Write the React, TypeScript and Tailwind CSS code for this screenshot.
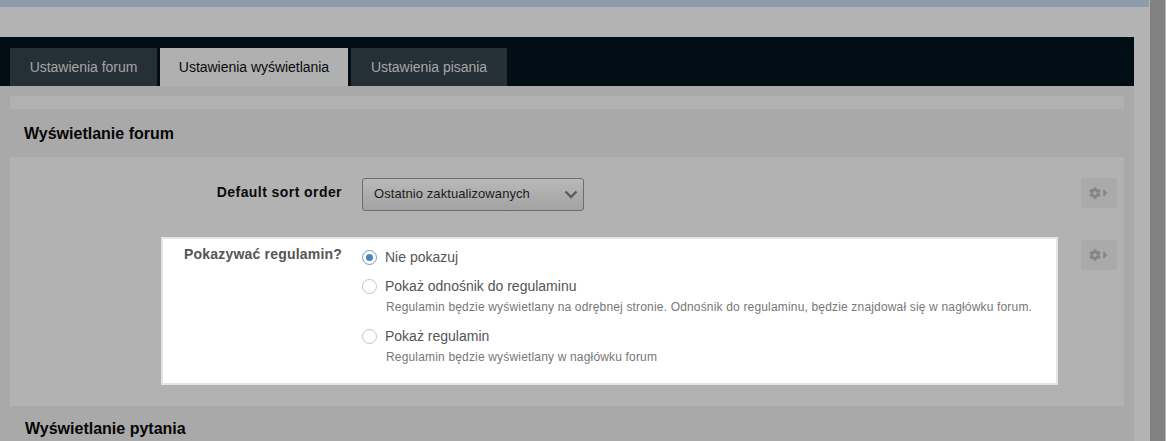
import React from 'react';
import { FaCog, FaCaretRight } from 'react-icons/fa';

const GearButton = ({ className = '' }: { className?: string }) => (
  <div className={`flex h-[30px] w-9 items-center justify-center rounded-[2px] bg-[#aaaaaa] pb-[1px] text-[#858585] ${className}`}>
    <FaCog className="h-3 w-3" />
    <FaCaretRight className="ml-[1px] h-3 w-[7px]" />
  </div>
);

const Radio = ({ checked = false }: { checked?: boolean }) => (
  <span
    className={`flex h-[15px] w-[15px] shrink-0 items-center justify-center rounded-full border bg-white ${
      checked ? 'border-[#6f9cc4]' : 'border-[#c4c4c4]'
    }`}
  >
    {checked && <span className="h-[7px] w-[7px] rounded-full bg-[#4a86bd]" />}
  </span>
);

const App = () => {
  return (
    <div className="flex h-[441px] w-[1166px] overflow-hidden bg-[#b3b3b3] font-['Liberation_Sans',Arial,sans-serif]">
      <div className="w-[1149px] shrink-0">
        {/* top strip */}
        <div className="h-[7px] bg-[#8e9dab]" />

        <div className="mt-[30px] w-[1134px]">
          {/* Tabs */}
          <div className="flex h-[49px] items-end gap-[3px] bg-[#020e15] pl-[10px] text-sm tracking-[-0.03px]">
            <div className="flex h-[38px] w-[147px] items-center justify-center bg-[#242f36] text-[#a6a6a6]">Ustawienia forum</div>
            <div className="flex h-[38px] w-[188px] items-center justify-center bg-[#b0b0b0] text-[#0b0b0b]">Ustawienia wyświetlania</div>
            <div className="flex h-[38px] w-[156px] items-center justify-center bg-[#242f36] text-[#a6a6a6]">Ustawienia pisania</div>
          </div>

          <div className="h-[355px] bg-[#a9a9a9] px-[10px] pt-[10px]">
            <div className="h-[13px] bg-[#b1b1b1]" />
            <h2 className="mt-[16px] pl-[14px] text-base leading-[18px] font-bold text-[#050505]">Wyświetlanie forum</h2>

            {/* Settings panel */}
            <div className="mt-[14px] h-[249px] bg-[#b2b2b2] pl-[151px]">
              <div className="flex pt-[21px]">
                <div className="w-[181px] pt-[6px] text-right text-sm leading-4 font-bold tracking-[0.43px] text-[#0a0a0a]">Default sort order</div>
                <div className="ml-[20px] flex h-[33px] w-[222px] items-center justify-between rounded-[3px] border border-[#6d6d6d] bg-linear-to-b from-[#b9b9b9] to-[#a2a2a2] pr-[5px] pl-[11px] text-sm text-[#1c1c1c]">
                  <span className="text-[13px] tracking-[0.08px]">Ostatnio zaktualizowanych</span>
                  <svg width="14" height="9" viewBox="0 0 14 9" fill="none" stroke="#5c5c5c" strokeWidth="2.4">
                    <path d="M1.5 1.5 7 7l5.5-5.5" />
                  </svg>
                </div>
                <GearButton className="ml-[497px]" />
              </div>

              <div className="mt-[26px] flex">
                {/* highlighted row */}
                <div className="flex h-[148px] w-[897px] border-2 border-[#e4e4e4] bg-white">
                  <div className="w-[179px] pt-[7px] text-right text-sm leading-4 font-bold tracking-[0.2px] text-[#555555]">Pokazywać regulamin?</div>
                  <div className="ml-[20px] pt-[10px] text-[#555555]">
                    <label className="flex h-4 items-center gap-2 text-sm">
                      <Radio checked />
                      <span>Nie pokazuj</span>
                    </label>
                    <label className="mt-[13px] flex h-4 items-center gap-2 text-sm">
                      <Radio />
                      <span>Pokaż odnośnik do regulaminu</span>
                    </label>
                    <p className="mt-[6px] pl-[24px] text-xs leading-[14px] tracking-[0.17px] text-[#777777]">
                      Regulamin będzie wyświetlany na odrębnej stronie. Odnośnik do regulaminu, będzie znajdował się w nagłówku forum.
                    </p>
                    <label className="mt-[14px] flex h-4 items-center gap-2 text-sm">
                      <Radio />
                      <span>Pokaż regulamin</span>
                    </label>
                    <p className="mt-[6px] pl-[24px] text-xs leading-[14px] tracking-[0.17px] text-[#777777]">
                      Regulamin będzie wyświetlany w nagłówku forum
                    </p>
                  </div>
                </div>
                <GearButton className="mt-[3px] ml-[23px]" />
              </div>
            </div>

            <h2 className="mt-[14px] pl-[15px] text-base leading-[18px] font-bold text-[#050505]">Wyświetlanie pytania</h2>
          </div>
        </div>
      </div>

      {/* scrollbar */}
      <div className="ml-[1px] h-full w-[15px] bg-[#818181]" />
    </div>
  );
};

export default App;
